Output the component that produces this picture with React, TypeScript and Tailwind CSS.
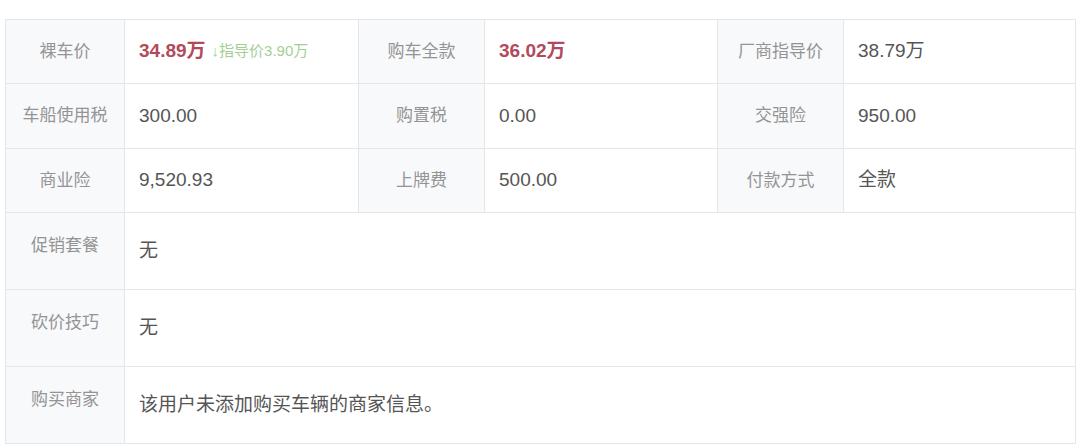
import React from "react";

const font = { fontFamily: '"Liberation Sans", Arial, "Noto Sans CJK SC", sans-serif' };

function Label({ children, className = "" }: { children: React.ReactNode; className?: string }) {
  return (
    <div className={`flex items-center justify-center border-r border-b border-[#e4e6ea] bg-[#f8f9fb] text-[17px] text-[#949494] ${className}`}>
      {children}
    </div>
  );
}

function Value({ children, className = "" }: { children: React.ReactNode; className?: string }) {
  return (
    <div className={`flex items-center border-r border-b border-[#e4e6ea] bg-white pl-[14px] text-[19px] text-[#555555] ${className}`}>
      {children}
    </div>
  );
}

export default function App() {
  return (
    <div className="h-[448px] w-[1080px] bg-white overflow-hidden" style={font}>
      <div className="ml-[5px] mt-[19px] w-[1071px] border-l border-t border-[#e4e6ea] grid grid-cols-[119px_234px_126px_233px_126px_1fr] grid-rows-[64px_65px_64px_77px_77px_77px]">
        <Label>裸车价</Label>
        <Value>
          <span className="font-bold text-[#b34a5c]">34.89万</span>
          <span className="ml-[6px] text-[15px] text-[#a3cf95]">↓指导价3.90万</span>
        </Value>
        <Label>购车全款</Label>
        <Value>
          <span className="font-bold text-[#b34a5c]">36.02万</span>
        </Value>
        <Label>厂商指导价</Label>
        <Value className="pl-[12px]">38.79万</Value>

        <Label>车船使用税</Label>
        <Value>300.00</Value>
        <Label>购置税</Label>
        <Value>0.00</Value>
        <Label>交强险</Label>
        <Value className="pl-[12px]">950.00</Value>

        <Label>商业险</Label>
        <Value>9,520.93</Value>
        <Label>上牌费</Label>
        <Value>500.00</Value>
        <Label>付款方式</Label>
        <Value className="pl-[12px]">全款</Value>

        <Label className="pb-[10px]">促销套餐</Label>
        <Value className="col-span-5">无</Value>

        <Label className="pb-[10px]">砍价技巧</Label>
        <Value className="col-span-5">无</Value>

        <Label className="pb-[10px]">购买商家</Label>
        <Value className="col-span-5 text-[18px]">该用户未添加购买车辆的商家信息。</Value>
      </div>
    </div>
  );
}
